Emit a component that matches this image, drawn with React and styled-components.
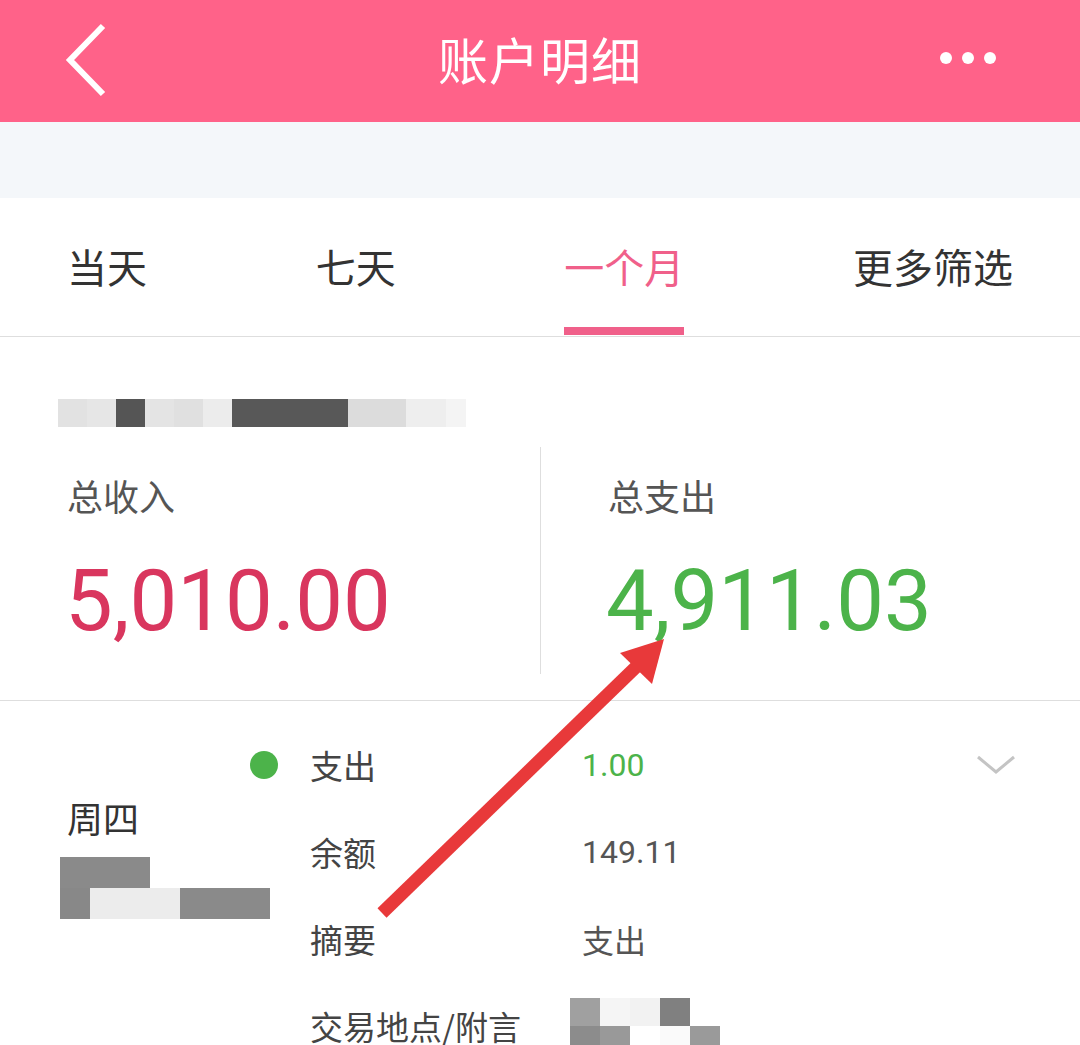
import styled, { createGlobalStyle } from "styled-components";

const GlobalStyle = createGlobalStyle`
  body {
    margin: 0;
    background: #fff;
    font-family: Roboto, "Noto Sans CJK SC", sans-serif;
  }
`;

const Page = styled.div`
  position: relative;
  width: 1080px;
  height: 1045px;
  overflow: hidden;
  background: #fff;
`;

const Header = styled.div`
  height: 122px;
  background: #ff6289;
  display: grid;
  grid-template-columns: 1fr auto 1fr;
  align-items: center;
`;

const Title = styled.div`
  color: #fff;
  font-family: "Noto Sans CJK SC", sans-serif;
  font-size: 50px;
  line-height: 1;
  letter-spacing: 1px;
  margin-bottom: 6px;
`;

const HeaderSide = styled.div`
  display: flex;
  justify-content: ${(p) => (p.right ? "flex-end" : "flex-start")};
  padding: ${(p) => (p.right ? "0 84px 6px 0" : "0 0 2px 64px")};
`;

const Band = styled.div`
  height: 76px;
  background: #f4f7fa;
`;

const Tabs = styled.div`
  height: 139px;
  display: flex;
  justify-content: space-between;
  padding: 0 67px;
  border-bottom: 1px solid #dedede;
  box-sizing: border-box;
`;

const Tab = styled.div`
  display: flex;
  flex-direction: column;
  justify-content: flex-end;
  align-items: stretch;
  font-family: "Noto Sans CJK SC", sans-serif;
  font-size: 40px;
  line-height: 40px;
  color: ${(p) => (p.active ? "#f0608a" : "#333")};
  span {
    margin-bottom: 41px;
    white-space: nowrap;
  }
  &::after {
    content: "";
    height: 8px;
    margin-bottom: 1px;
    background: ${(p) => (p.active ? "#f0608a" : "transparent")};
  }
`;

const Summary = styled.div`
  padding: 62px 0 26px;
  border-bottom: 1px solid #dedede;
`;

const MosaicGrid = styled.div`
  display: flex;
  flex-direction: column;
  margin-left: ${(p) => p.left || 0}px;
  filter: blur(0.6px);
`;

const MosaicRow = styled.div`
  display: flex;
`;

const Cell = styled.div`
  flex-shrink: 0;
  width: ${(p) => p.w}px;
  height: ${(p) => p.h}px;
  background: ${(p) => p.c};
`;

const Mosaic = ({ rows, left, h }) => (
  <MosaicGrid left={left}>
    {rows.map((row, i) => (
      <MosaicRow key={i}>
        {row.map(([w, c], j) => (
          <Cell key={j} w={w} h={h} c={c} />
        ))}
      </MosaicRow>
    ))}
  </MosaicGrid>
);

const Totals = styled.div`
  margin-top: 20px;
  display: grid;
  grid-template-columns: 1fr 1fr;
  height: 227px;
`;

const TotalCol = styled.div`
  padding: 29px 0 0 67px;
  border-left: ${(p) => (p.divider ? "1px solid #dedede" : "none")};
`;

const TotalLabel = styled.div`
  font-family: "Noto Sans CJK SC", sans-serif;
  font-size: 36px;
  line-height: 38px;
  color: #555;
`;

const TotalValue = styled.div`
  margin-left: -2px;
  margin-top: 37px;
  font-family: Roboto, sans-serif;
  font-size: 85px;
  line-height: 100px;
  color: ${(p) => p.color};
`;

const Details = styled.div`
  display: flex;
  padding-top: 20px;
`;

const DayBlock = styled.div`
  width: 250px;
  flex-shrink: 0;
  padding-top: 76px;
  box-sizing: border-box;
`;

const DayName = styled.div`
  padding-left: 67px;
  font-family: "Noto Sans CJK SC", sans-serif;
  font-size: 36px;
  line-height: 40px;
  color: #333;
  margin-bottom: 20px;
`;

const Rows = styled.div`
  flex: 1;
  display: flex;
  flex-direction: column;
`;

const Row = styled.div`
  height: 87px;
  display: flex;
  align-items: center;
`;

const DotSlot = styled.div`
  width: 60px;
  display: flex;
  align-items: center;
`;

const Dot = styled.div`
  width: 28px;
  height: 28px;
  border-radius: 50%;
  background: #4cb34a;
`;

const Label = styled.div`
  width: 272px;
  font-family: "Noto Sans CJK SC", sans-serif;
  font-size: 33px;
  color: #444;
`;

const Value = styled.div`
  flex: 1;
  font-family: Roboto, "Noto Sans CJK SC", sans-serif;
  font-size: 32px;
  color: ${(p) => p.color || "#555"};
`;

const Chevron = styled.div`
  width: 104px;
  display: flex;
  justify-content: flex-start;
`;

const Overlay = styled.svg`
  position: absolute;
  left: 0;
  top: 0;
  pointer-events: none;
`;

const BackIcon = () => (
  <svg width="44" height="74" viewBox="0 0 44 74">
    <polyline
      points="39,3 6,37 39,71"
      fill="none"
      stroke="#fff"
      strokeWidth="6"
    />
  </svg>
);

const MoreIcon = () => (
  <svg width="56" height="14" viewBox="0 0 56 14">
    <circle cx="6" cy="7" r="6" fill="#fff" />
    <circle cx="28" cy="7" r="6" fill="#fff" />
    <circle cx="50" cy="7" r="6" fill="#fff" />
  </svg>
);

const DownIcon = () => (
  <svg width="40" height="20" viewBox="0 0 40 20">
    <polyline
      points="2,2 20,17 38,2"
      fill="none"
      stroke="#c4c4c4"
      strokeWidth="3"
    />
  </svg>
);

const tabs = ["当天", "七天", "一个月", "更多筛选"];

const details = [
  { label: "支出", value: "1.00", color: "#4cb34a", dot: true, chevron: true },
  { label: "余额", value: "149.11" },
  { label: "摘要", value: "支出" },
  { label: "交易地点/附言", mosaic: true },
];

const dateMosaic = [
  [
    [29, "#e2e2e2"],
    [29, "#e6e6e6"],
    [29, "#555"],
    [29, "#e4e4e4"],
    [29, "#e0e0e0"],
    [29, "#ececec"],
    [116, "#585858"],
    [58, "#dcdcdc"],
    [40, "#eeeeee"],
    [20, "#f4f4f4"],
  ],
];

const dayMosaic = [
  [[90, "#8a8a8a"]],
  [
    [30, "#888"],
    [90, "#ececec"],
    [90, "#8a8a8a"],
  ],
];

const placeMosaic = [
  [
    [30, "#a0a0a0"],
    [30, "#f5f5f5"],
    [30, "#f2f2f2"],
    [30, "#808080"],
  ],
  [
    [30, "#8c8c8c"],
    [30, "#999"],
    [30, "#fff"],
    [30, "#fafafa"],
    [30, "#9a9a9a"],
  ],
];

const App = () => {
  return (
    <Page>
      <GlobalStyle />
      <Header>
        <HeaderSide>
          <BackIcon />
        </HeaderSide>
        <Title>账户明细</Title>
        <HeaderSide right>
          <MoreIcon />
        </HeaderSide>
      </Header>
      <Band />
      <Tabs>
        {tabs.map((t, i) => (
          <Tab key={t} active={i === 2}>
            <span>{t}</span>
          </Tab>
        ))}
      </Tabs>
      <Summary>
        <Mosaic rows={dateMosaic} left={58} h={28} />
        <Totals>
          <TotalCol>
            <TotalLabel>总收入</TotalLabel>
            <TotalValue color="#d9365e">5,010.00</TotalValue>
          </TotalCol>
          <TotalCol divider>
            <TotalLabel>总支出</TotalLabel>
            <TotalValue color="#4cb34a">4,911.03</TotalValue>
          </TotalCol>
        </Totals>
      </Summary>
      <Details>
        <DayBlock>
          <DayName>周四</DayName>
          <Mosaic rows={dayMosaic} left={60} h={31} />
        </DayBlock>
        <Rows>
          {details.map((d) => (
            <Row key={d.label}>
              <DotSlot>{d.dot && <Dot />}</DotSlot>
              <Label>{d.label}</Label>
              <Value color={d.color}>
                {d.mosaic ? (
                  <Mosaic rows={placeMosaic} left={-12} h={28} />
                ) : (
                  d.value
                )}
              </Value>
              <Chevron>{d.chevron && <DownIcon />}</Chevron>
            </Row>
          ))}
        </Rows>
      </Details>
      <Overlay width="1080" height="1045" viewBox="0 0 1080 1045">
        <line
          x1="382"
          y1="913"
          x2="636"
          y2="667"
          stroke="#e8393a"
          strokeWidth="13"
        />
        <polygon points="664,639 620,653 652,684" fill="#e8393a" />
      </Overlay>
    </Page>
  );
};

export default App;
